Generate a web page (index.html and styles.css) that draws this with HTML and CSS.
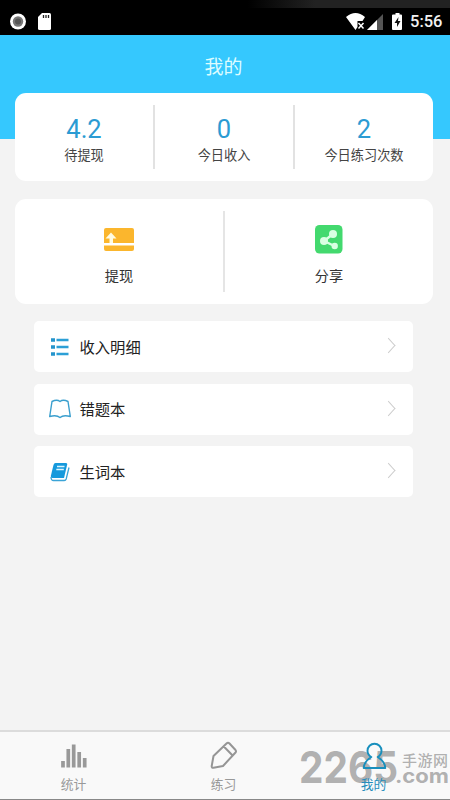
FILE: index.html
```html
<!DOCTYPE html>
<html lang="zh-CN">
<head>
<meta charset="utf-8">
<title>我的</title>
<link rel="stylesheet" href="styles.css">
</head>
<body>
<div class="screen">
  <div class="status">
    <svg class="status-left" width="60" height="35" viewBox="0 0 60 35"><circle cx="18" cy="21.5" r="8" fill="#fff"/><circle cx="18" cy="21.5" r="5.2" fill="#777"/><circle cx="18" cy="21.5" r="3" fill="#555"/><path d="M42 13h7.500a1.500 1.500 0 0 1 1.500 1.500v14a1.500 1.500 0 0 1-1.500 1.500h-10a1.500 1.500 0 0 1-1.500-1.500V17z" fill="#fff"/><path d="M43.500 15v3M46 15v3M48.500 15v3" stroke="#222" stroke-width="1.300"/></svg>
    <svg width="62" height="35" viewBox="345 0 62 35"><path d="M346 17q9.500-8 19 0l-2.500 4h-5v6l-2 3z" fill="#fff"/><path d="M358.500 23l5 5.500m0-5.500l-5 5.500" stroke="#fff" stroke-width="1.500"/><path d="M383 14v16h-16z" fill="#555"/><path d="M377 20v10h-10z" fill="#fff"/><path d="M393.500 14.500h2V13h4v1.500h1.500q1 0 1 1V29q0 1-1 1h-8q-1 0-1-1V15.500q0-1 1-1z" fill="#fff"/><path d="M398.500 17l-4 6h2.500v4l3.500-6H398z" fill="#111"/></svg>
    <span class="clock">5:56</span>
  </div>
  <header class="header">我的</header>
  <main class="main">
    <section class="card stats">
      <div class="stat"><b>4.2</b><span>待提现</span></div>
      <div class="stat"><b>0</b><span>今日收入</span></div>
      <div class="stat"><b>2</b><span>今日练习次数</span></div>
    </section>
    <section class="card actions">
      <div class="action">
        <svg width="32" height="32" viewBox="0 0 32 32"><path d="M3 5h26q2 0 2 2v13H1V7q0-2 2-2zM1 22.500h30V26q0 2-2 2H3q-2 0-2-2z" fill="#fbb62d"/><path d="M8 9.500l5.500 6H10V20H6.500v-4.500h-4z" fill="#fffbe2"/></svg>
        <span>提现</span>
      </div>
      <div class="action">
        <svg width="32" height="32" viewBox="0 0 32 32"><rect x="2" y="2" width="27.500" height="28.500" rx="4.500" fill="#43d96e"/><path d="M20 11L11 18l10.500 5" fill="none" stroke="#d9ffe2" stroke-width="2.400"/><circle cx="20" cy="11" r="4" fill="#d9ffe2"/><circle cx="11" cy="18" r="4" fill="#d9ffe2"/><circle cx="21.700" cy="23" r="3.200" fill="#d9ffe2"/></svg>
        <span>分享</span>
      </div>
    </section>
    <nav class="list">
      <a class="row"><svg width="24" height="24" viewBox="0 0 24 24"><path d="M3 5h4M3 12h4M3 19h4" stroke="#2494cc" stroke-width="3.600"/><path d="M8.500 5h12M8.500 12h12M8.500 19h12" stroke="#2c9fd6" stroke-width="2.500"/></svg><span>收入明细</span><i class="arrow"></i></a>
      <a class="row"><svg width="24" height="24" viewBox="0 0 24 24"><path d="M4 4.500q5-2.500 8 0 3-2.500 8 0l2.300 15q-7-1.800-10.300 1-3.300-2.800-10.300-1z" fill="none" stroke="#3a9fce" stroke-width="1.400" stroke-linejoin="round"/></svg><span>错题本</span><i class="arrow"></i></a>
      <a class="row"><svg width="24" height="24" viewBox="0 0 24 24"><path d="M7.500 3H18q1.500 0 1.200 1.500L16 18H4.500q-2 0-1.700-2L5.500 5Q6 3 7.500 3z" fill="#1599dc"/><path d="M3 17q0 3.500 2.500 3.500h10.700q1.500 0 2-1.500L21 7.500" fill="none" stroke="#3ba4d7" stroke-width="1.300"/><path d="M9 6.500h7.500M8.300 9.500h7.500" stroke="#d9f5ff" stroke-width="1.300"/></svg><span>生词本</span><i class="arrow"></i></a>
    </nav>
  </main>
  <footer class="tabs">
    <div class="tab"><svg width="30" height="30" viewBox="0 0 30 30"><path d="M4 21v6.500M9.300 9v18.500M14.700 4.500v23M20.200 12v15.500M25.700 18v9.500" stroke="#999" stroke-width="3.700"/></svg><span>统计</span></div>
    <div class="tab"><svg width="30" height="30" viewBox="0 0 30 30"><path d="M17.500 3.500Q19 2 20.500 3.500l6 6.500q1 1.300 0 2.500L14 26 4.500 27.700q-2 .3-1.800-1.700L4.500 16zM14.800 6.500l8.800 9" fill="none" stroke="#959595" stroke-width="2" stroke-linejoin="round"/></svg><span>练习</span></div>
    <div class="tab active"><svg width="30" height="30" viewBox="0.500 -0.500 30 30"><path d="M12.800 16.500C10.300 15 9 13 9 10.200a7 7 0 0 1 14 0c0 2.800-1.300 4.800-3.800 6.300 4.300 2.700 7.300 5.300 7.600 11H5.200c.300-5.700 3.300-8.300 7.600-11z" fill="none" stroke="#188fbd" stroke-width="1.900" stroke-linejoin="round"/></svg><span>我的</span></div>
  </footer>
  <svg class="mark" width="152" height="48" viewBox="298 746 152 48"><g fill="#8c8c8c" fill-opacity=".68"><text class="digits" x="299" y="782.500" textLength="99" lengthAdjust="spacingAndGlyphs">2265</text><text class="site" x="402" y="766" textLength="46">手游网</text><text class="com" x="395" y="782.500" textLength="54" lengthAdjust="spacingAndGlyphs">.com</text></g></svg>
</div>
</body>
</html>
```
FILE: styles.css
```css
* { box-sizing: border-box; }
body { margin: 0; font-family: "Noto Sans CJK SC", sans-serif; background: #f3f3f3; }
.screen { position: relative; width: 450px; height: 800px; overflow: hidden; display: flex; flex-direction: column; background: linear-gradient(#35c8fe 139px, #f3f3f3 139px); }
.status { height: 35px; flex: none; display: flex; background: linear-gradient(90deg, #000 55%, #222 70%) 0 0 / 100% 8px no-repeat #000; }
.status-left { margin-right: auto; }
.clock { width: 43px; padding-left: 3px; font: 500 16.500px/44px Roboto, sans-serif; color: #f2f2f2; }
.header { height: 58px; flex: none; text-align: center; padding-right: 3px; font-size: 19px; line-height: 62px; color: #ddfcff; }
.main { flex: 1; padding: 0 17px 0 15px; }
.card { display: flex; background: #fff; border-radius: 11px; }
.stats { height: 88px; padding: 12px 0; }
.stat { flex: 1; display: flex; flex-direction: column; align-items: center; }
.stat + .stat { border-left: 2px solid #e2e2e2; }
.stat b { font: 400 25.500px/28px Roboto, sans-serif; color: #2b9bd3; margin-top: 10px; }
.stat span { font-size: 13.2px; line-height: 20px; color: #444; margin-top: 2px; }
.actions { height: 105px; margin-top: 18px; padding: 12px 0; }
.action { flex: 1; display: flex; flex-direction: column; align-items: center; padding-top: 12px; }
.action + .action { border-left: 2px solid #e5e5e5; }
.action span { font-size: 14.2px; line-height: 20px; color: #333; margin-top: 10px; }
.list { display: flex; flex-direction: column; gap: 11.500px; padding: 17px 20px 0 19px; }
.row { height: 51px; display: flex; align-items: center; background: #fff; border-radius: 5px; padding: 0 18px 0 14px; }
.row span { flex: 1; margin: -2px 0 0 7.500px; font-size: 15.300px; line-height: 22px; color: #222; }
.arrow { width: 11px; height: 11px; border: solid #ccc; border-width: 1.200px 1.200px 0 0; transform: translate(-1px, -1px) scaleX(.9) rotate(45deg); }
.tabs { height: 70px; flex: none; display: flex; background: #f9f9f9; border-top: 2px solid #dcdcdc; border-bottom: 1px solid #888; }
.tab { width: 150px; display: flex; flex-direction: column; align-items: center; padding: 8px 3px 0 0; color: #999; }
.tab span { font-size: 12.800px; line-height: 18px; margin-top: 5px; }
.tab.active { color: #268dbc; }
.tab.active svg, .tab.active span { position: relative; z-index: 1; }
.mark { position: absolute; left: 298px; top: 746px; }
.digits { font: 700 44px Inter, sans-serif; }
.site { font: 500 15px "Noto Sans CJK SC", sans-serif; }
.com { font: 700 20px Inter, sans-serif; }
```
